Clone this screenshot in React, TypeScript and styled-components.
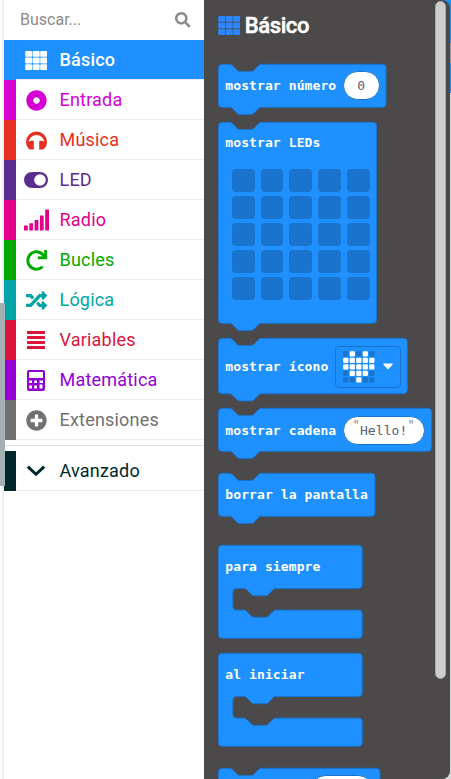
import React from "react";
import styled, { createGlobalStyle } from "styled-components";
import { FaDotCircle, FaPlusCircle, FaRandom, FaRedo, FaSearch } from "react-icons/fa";

const GlobalStyle = createGlobalStyle`
  * { box-sizing: border-box; }
  html, body { margin: 0; padding: 0; overflow: hidden; background: #fff; }
  #root { height: 779px; }
`;

const BLUE = "#1e90ff";
const EDGE = "#1a73cc";

const Page = styled.div`
  position: relative;
  display: flex;
  width: 451px;
  height: 779px;
  overflow: hidden;
  background: #fff;
  font-family: Roboto, sans-serif;
`;

const Gutter = styled.div`
  width: 4px;
  flex: none;
  border-right: 2px solid #edeff2;
`;

const SideThumb = styled.div`
  position: absolute;
  left: 0;
  top: 303px;
  width: 5px;
  height: 183px;
  background: #a4b1b2;
`;

const Sidebar = styled.nav`
  width: 200px;
  flex: none;
`;

const Search = styled.div`
  display: flex;
  align-items: center;
  justify-content: space-between;
  height: 40px;
  padding: 0 13.5px 0 16px;
  font-size: 16px;
  line-height: 20px;
  color: #8b8b8b;
`;

const Category = styled.div<{ $color: string; $active?: boolean }>`
  display: flex;
  align-items: center;
  height: 40px;
  border-left: 12px solid ${(p) => p.$color};
  color: ${(p) => (p.$active ? "#fff" : p.$color)};
  background: ${(p) => (p.$active ? p.$color : "#fff")};
  box-shadow: inset 0 -1px 0 #eaeeee;
  font-size: 18px;
  font-weight: ${(p) => (p.$active ? 500 : 400)};
`;

const IconBox = styled.span`
  display: flex;
  align-items: center;
  justify-content: center;
  width: 40px;
  height: 40px;
  flex: none;
`;

const CategoryName = styled.span`
  margin-left: 3.5px;
  line-height: 22px;
  letter-spacing: 0.2px;
`;

const Separator = styled.div`
  height: 11px;
  border-bottom: 5px solid #fff;
  box-shadow: inset 0 -1px 0 #dcdfdf;
`;

const Workspace = styled.div`
  flex: 1;
  background: linear-gradient(${BLUE} 0 43px, #8f9aa3 43px 63px, ${BLUE} 63px 93px, #d5d5d5 93px);
`;

const Flyout = styled.section`
  display: flex;
  width: 246px;
  height: 779px;
  overflow: hidden;
  background: #4b4949;
  border-radius: 0 8px 8px 0;
`;

const BlockList = styled.div`
  width: 231px;
  flex: none;
  padding-left: 14px;
`;

const ScrollThumb = styled.div`
  width: 11px;
  height: 678px;
  margin-top: 1px;
  border: 1px solid #aaa;
  border-radius: 6px;
  background: #cecece;
`;

const Heading = styled.h2`
  display: flex;
  align-items: center;
  gap: 4.4px;
  height: 63.6px;
  margin: 0;
  padding-bottom: 12.6px;
  color: #fff;
  font-size: 22px;
  font-weight: 500;
  letter-spacing: -0.4px;
  -webkit-text-stroke: 0.5px #fff;
`;

const BlockBox = styled.div<{ $w: number; $h: number; $gap: number }>`
  position: relative;
  display: flex;
  width: ${(p) => p.$w}px;
  height: ${(p) => p.$h}px;
  margin-bottom: ${(p) => p.$gap}px;
`;

const Outline = styled.svg`
  position: absolute;
  left: 0;
  top: 0;
  overflow: visible;
`;

const Content = styled.div<{ $h: number }>`
  position: relative;
  display: flex;
  align-items: center;
  height: ${(p) => p.$h}px;
  padding-left: 7.3px;
  gap: 6.4px;
`;

const Label = styled.span`
  font: 700 13px/16px "DejaVu Sans Mono", monospace;
  letter-spacing: 0.1px;
  white-space: pre;
  color: #fff;
`;

const Oval = styled.span<{ $w: number }>`
  display: flex;
  align-items: center;
  justify-content: center;
  width: ${(p) => p.$w}px;
  height: 29px;
  border: 1px solid ${EDGE};
  border-radius: 15px;
  background: #fff;
  color: #575e75;
  font: 13px/16px "DejaVu Sans Mono", monospace;
  letter-spacing: 0.1px;
`;

const Quote = styled.span`
  color: #8a7c96;
  font-size: 12px;
  transform: translateY(-6px);
`;

const LedGrid = styled.div`
  display: grid;
  grid-template-columns: repeat(5, 22.8px);
  grid-auto-rows: 22.8px;
  gap: 4.2px 6px;
  padding: 5.4px 0 0 13.8px;
`;

const Led = styled.i`
  border-radius: 4px;
  background: ${EDGE};
`;

const LedBody = styled.div`
  position: relative;
`;

const IconField = styled.span`
  display: flex;
  align-items: center;
  gap: 8px;
  width: 66px;
  height: 42px;
  padding-left: 7px;
  border: 1px solid ${EDGE};
  border-radius: 4px;
`;

const NOTCH = "c1.8 0 2.7 .9 3.6 1.8l3.6 3.6c.9 .9 1.8 1.8 3.6 1.8h10.8c1.8 0 2.7-.9 3.6-1.8l3.6-3.6c.9-.9 1.8-1.8 3.6-1.8";
const NUB = "c-1.8 0-2.7 .9-3.6 1.8l-3.6 3.6c-.9 .9-1.8 1.8-3.6 1.8h-10.8c-1.8 0-2.7-.9-3.6-1.8l-3.6-3.6c-.9-.9-1.8-1.8-3.6-1.8";

const statementPath = (w: number, h: number) =>
  `M0 3.6a3.6 3.6 0 0 1 3.6-3.6h7.2${NOTCH}H${w - 3.6}a3.6 3.6 0 0 1 3.6 3.6V${h - 3.6}a3.6 3.6 0 0 1-3.6 3.6H43.2${NUB}H3.6a3.6 3.6 0 0 1-3.6-3.6z`;

const wrapPath = (w: number, h: number) =>
  `M0 3.6a3.6 3.6 0 0 1 3.6-3.6H${w - 3.6}a3.6 3.6 0 0 1 3.6 3.6V39.6a3.6 3.6 0 0 1-3.6 3.6H57.6${NUB}H18a3.6 3.6 0 0 0-3.6 3.6V61.2a3.6 3.6 0 0 0 3.6 3.6H25.2${NOTCH}H${w - 3.6}a3.6 3.6 0 0 1 3.6 3.6V${h - 3.6}a3.6 3.6 0 0 1-3.6 3.6H3.6a3.6 3.6 0 0 1-3.6-3.6z`;

type BlockProps = { w: number; h: number; gap: number; wrap?: boolean; children: React.ReactNode };

function Block({ w, h, gap, wrap, children }: BlockProps) {
  return (
    <BlockBox $w={w} $h={h} $gap={gap}>
      <Outline width={w} height={h}>
        <path
          transform="translate(.5 .3)"
          d={wrap ? wrapPath(w - 0.5, h) : statementPath(w - 0.5, h)}
          fill={BLUE}
          stroke={EDGE}
        />
      </Outline>
      {children}
    </BlockBox>
  );
}

const GridIcon = ({ color }: { color: string }) => (
  <svg width="22.4" height="19" viewBox="0 0 22 19" fill={color}>
    {[0, 6.6, 13.2].map((y) =>
      [0, 7.5, 15].map((x) => <rect key={`${x}-${y}`} x={x} y={y} width="7" height="5.8" rx=".9" />)
    )}
  </svg>
);

const HeadphonesIcon = () => (
  <svg width="21" height="19" viewBox="0 0 21 19" fill="currentColor">
    <path d="M0 11A10.5 10.5 0 0 1 21 11c0 3.200-1.500 6-4 7.500h-3.800V10c1.800-.6 3.800-.4 5.300.8A8.100 8.100 0 0 0 2.500 10.800c1.500-1.200 3.500-1.400 5.300-.8v8.500H4C1.500 17 0 14.200 0 11z" />
  </svg>
);

const ToggleIcon = () => (
  <svg width="24" height="16" viewBox="0 0 24 16">
    <rect width="24" height="16" rx="8" fill="currentColor" />
    <circle cx="16" cy="8" r="5.8" fill="#fff" />
  </svg>
);

const SignalIcon = () => (
  <svg width="25" height="22" viewBox="0 0 25 22" fill="currentColor">
    <rect x="0" y="16.5" width="3.8" height="5" rx=".5" />
    <rect x="5.3" y="14.3" width="3.8" height="7.2" rx=".5" />
    <rect x="10.6" y="11" width="3.8" height="10.5" rx=".5" />
    <rect x="15.9" y="6.5" width="3.8" height="15" rx=".5" />
    <rect x="21.2" y=".4" width="3.8" height="21.1" rx=".5" />
  </svg>
);

const LinesIcon = () => (
  <svg width="18" height="18" viewBox="0 0 18 18" fill="currentColor">
    {[0, 5, 10, 15].map((y) => (
      <rect key={y} y={y} width="18" height="3" rx=".4" />
    ))}
  </svg>
);

const CalculatorIcon = () => (
  <svg width="18" height="21" viewBox="0 0 18 21" fill="currentColor">
    <path
      fillRule="evenodd"
      d="M2 0H16a2 2 0 0 1 2 2V19a2 2 0 0 1-2 2H2a2 2 0 0 1-2-2V2a2 2 0 0 1 2-2zM2 2V8H16V2zM2.2 10.5V13H5V10.5zM7.2 10.5V13H10V10.5zM12.5 10.5V13H16V10.5zM2.2 15.5V18.5H5V15.5zM7.2 15.5V18.5H10V15.5zM12.5 14.5V18.5H15.5V14.5z"
    />
  </svg>
);

const ChevronIcon = () => (
  <svg width="20" height="12" viewBox="0 0 20 12" fill="none" stroke="currentColor" strokeWidth="3">
    <path d="M1.8 1.7L10 9.3l8.2-7.6" />
  </svg>
);

const categories = [
  { name: "Básico", color: BLUE, icon: <GridIcon color="#fff" /> },
  { name: "Entrada", color: "#d400d4", icon: <FaDotCircle size={21} /> },
  { name: "Música", color: "#e63022", icon: <HeadphonesIcon /> },
  { name: "LED", color: "#5c2d91", icon: <ToggleIcon /> },
  { name: "Radio", color: "#e3008c", icon: <SignalIcon /> },
  { name: "Bucles", color: "#00aa00", icon: <FaRedo size={21} /> },
  { name: "Lógica", color: "#00a4a6", icon: <FaRandom size={21} /> },
  { name: "Variables", color: "#dc143c", icon: <LinesIcon /> },
  { name: "Matemática", color: "#9400d3", icon: <CalculatorIcon /> },
  { name: "Extensiones", color: "#717171", icon: <FaPlusCircle size={21} /> },
];

const HEART = ".#.#." + "#####" + "#####" + ".###." + "..#..";

const HeartLeds = () => (
  <svg width="32" height="32" viewBox="0 0 32 32">
    {HEART.split("").map((c, i) => (
      <rect
        key={i}
        x={0.2 + (i % 5) * 6.5}
        y={0.2 + Math.floor(i / 5) * 6.5}
        width="5.2"
        height="5.2"
        rx="1"
        fill={c === "#" ? "#fff" : EDGE}
      />
    ))}
  </svg>
);

export default function App() {
  return (
    <Page>
      <GlobalStyle />
      <Gutter />
      <Sidebar>
        <Search>
          Buscar...
          <FaSearch size={15.5} />
        </Search>
        {categories.map((c, i) => (
          <Category key={c.name} $color={c.color} $active={i === 0}>
            <IconBox>{c.icon}</IconBox>
            <CategoryName>{c.name}</CategoryName>
          </Category>
        ))}
        <Separator />
        <Category $color="#00272b">
          <IconBox>
            <ChevronIcon />
          </IconBox>
          <CategoryName>Avanzado</CategoryName>
        </Category>
      </Sidebar>
      <Workspace>
        <Flyout>
          <BlockList>
            <Heading>
              <GridIcon color="#2e86ff" />
              Básico
            </Heading>
            <Block w={168} h={43} gap={15}>
              <Content $h={44}>
                <Label>mostrar número</Label>
                <Oval $w={37}>0</Oval>
              </Content>
            </Block>
            <Block w={158.5} h={201} gap={15.5}>
              <LedBody>
                <Content $h={42}>
                  <Label>mostrar LEDs</Label>
                </Content>
                <LedGrid>
                  {Array.from({ length: 25 }, (_, i) => (
                    <Led key={i} />
                  ))}
                </LedGrid>
              </LedBody>
            </Block>
            <Block w={189.3} h={55.5} gap={14.5}>
              <Content $h={57}>
                <Label>mostrar ícono</Label>
                <IconField>
                  <HeartLeds />
                  <svg width="10" height="7" viewBox="0 0 10 7">
                    <path d="M1 1.2H9L5 5.5z" fill="#fff" stroke="#fff" strokeWidth="1.4" strokeLinejoin="round" />
                  </svg>
                </IconField>
              </Content>
            </Block>
            <Block w={213.5} h={43} gap={22}>
              <Content $h={45}>
                <Label>mostrar cadena</Label>
                <Oval $w={82}>
                  <Quote>"</Quote>Hello!<Quote>"</Quote>
                </Oval>
              </Content>
            </Block>
            <Block w={157} h={43} gap={29}>
              <Content $h={43}>
                <Label>borrar la pantalla</Label>
              </Content>
            </Block>
            <Block w={144.2} h={93} gap={15} wrap>
              <Content $h={43}>
                <Label>para siempre</Label>
              </Content>
            </Block>
            <Block w={144.2} h={93} gap={22} wrap>
              <Content $h={43}>
                <Label>al iniciar</Label>
              </Content>
            </Block>
            <Block w={162} h={43} gap={0}>
              <Content $h={43}>
                <Label>{" ".repeat(10)}</Label>
                <Oval $w={62} />
              </Content>
            </Block>
          </BlockList>
          <ScrollThumb />
        </Flyout>
      </Workspace>
      <SideThumb />
    </Page>
  );
}
